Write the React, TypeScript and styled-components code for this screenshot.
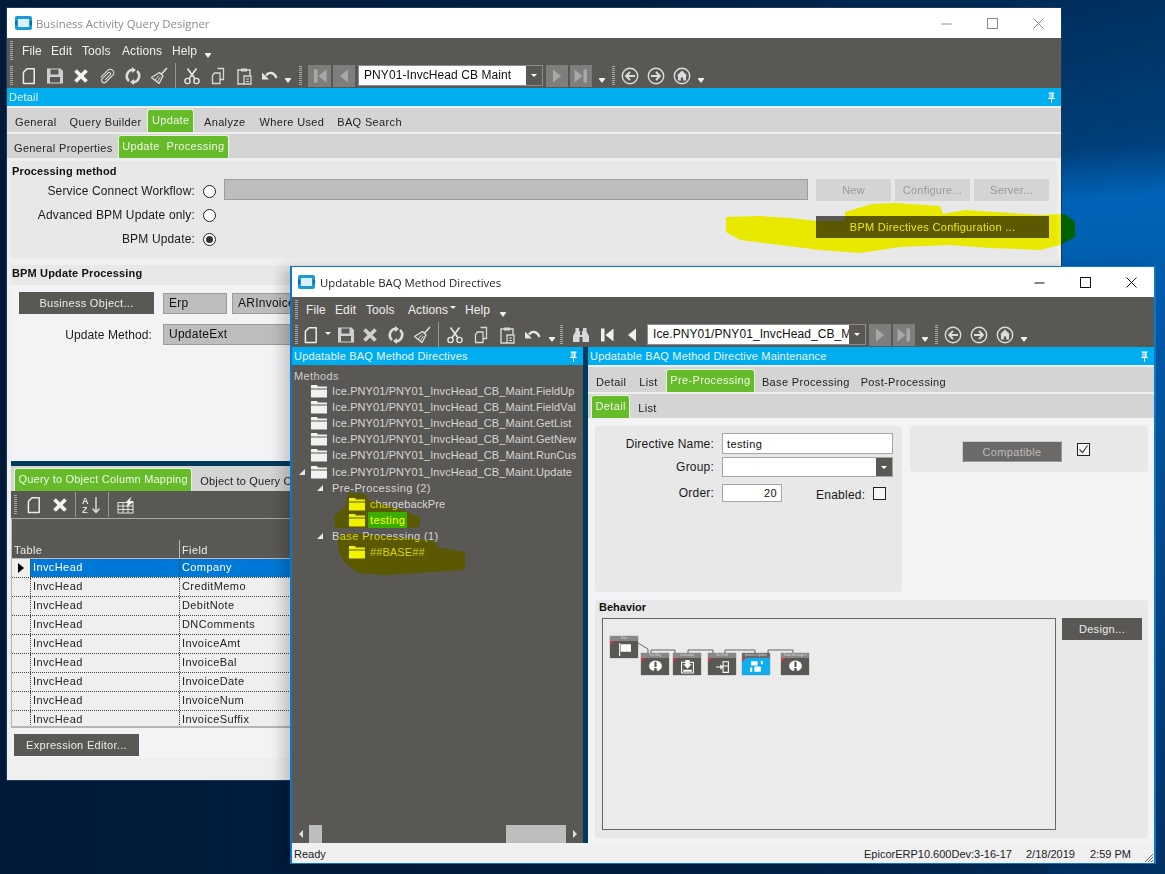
import React from "react";
import styled, { createGlobalStyle } from "styled-components";

const GlobalStyle = createGlobalStyle`
  html, body {
    margin: 0;
    padding: 0;
    height: 100%;
  }
  body {
    font-family: "Liberation Sans", Arial, sans-serif;
    font-size: 12px;
    overflow: hidden;
  }
`;

const DARK = "#5a5855";
const BLUE = "#00adef";
const GREEN = "#66bb2a";
const NAVY = "#003a5c";
const TAB_GREY = "#d4d4d4";
const GROUP_GREY = "#e8e8e8";
const PANEL = "#f3f3f6";

const Desktop = styled.div`
  position: relative;
  width: 1165px;
  height: 874px;
  overflow: hidden;
  background:
    linear-gradient(176deg, rgba(0, 50, 100, 0.2) 0%, rgba(0, 70, 135, 0.7) 17%, rgba(0, 100, 185, 0.98) 23%, rgba(0, 78, 150, 0.9) 60%, rgba(0, 50, 105, 0.7) 100%) right / 10% 100% no-repeat,
    linear-gradient(90deg, #011a38 0%, #011e42 55%, #00305f 100%);
`;

const QueryWindow = styled.div`
  position: absolute;
  left: 6px;
  top: 7px;
  width: 1054px;
  height: 772px;
  border: 1px solid #1c3a55;
  background: #efefef;
  display: flex;
  flex-direction: column;
`;

const DirectiveWindow = styled.div`
  position: absolute;
  left: 290px;
  top: 266px;
  width: 862px;
  height: 596px;
  border: 2px solid #0a78c8;
  border-width: 1px 2px 1px 2px;
  background: #efefef;
  display: flex;
  flex-direction: column;
  box-shadow: -8px 2px 12px rgba(0, 0, 0, 0.18);
`;

const TitleBar = styled.div<{ $inset: number; $gap: number }>`
  height: 30px;
  flex: none;
  background: #fff;
  display: flex;
  align-items: center;
  padding-left: ${(props) => props.$inset}px;
  gap: ${(props) => props.$gap}px;
`;

const TitleText = styled.div<{ $dim?: boolean }>`
  flex: 1;
  font-family: "Open Sans", "Liberation Sans", sans-serif;
  font-size: 11.4px;
  color: ${(props) => (props.$dim ? "#8b8b8b" : "#222")};
`;

const WindowControls = styled.div<{ $dim?: boolean }>`
  display: flex;
  color: ${(props) => (props.$dim ? "#8a8a8a" : "#111")};
`;

const WindowControl = styled.div`
  width: 46px;
  height: 30px;
  display: flex;
  align-items: center;
  justify-content: center;
`;

const Toolbars = styled.div`
  flex: none;
  height: 50px;
  background: ${DARK};
  color: #f0f0f0;
  display: flex;
  flex-direction: column;
`;

const MenuRow = styled.div`
  height: 25px;
  display: flex;
  align-items: center;
  padding-left: 3px;
`;

const IconRow = styled.div`
  height: 25px;
  display: flex;
  align-items: center;
  padding-left: 3px;
`;

const Grip = styled.div<{ $gap?: number }>`
  width: 3px;
  height: 19px;
  flex: none;
  margin-right: ${(props) => props.$gap ?? 6}px;
  background: repeating-linear-gradient(#a8a8a8 0 1px, transparent 1px 2px);
`;

const MenuItem = styled.div<{ $width: number }>`
  width: ${(props) => props.$width}px;
  flex: none;
  font-size: 12px;
  letter-spacing: 0.1px;
  display: flex;
  align-items: center;
`;

const MenuCaret = styled.span`
  margin-left: 2px;
  margin-bottom: 4px;
  border: 3px solid transparent;
  border-top: 3px solid #f0f0f0;
  border-bottom: none;
`;

const Overflow = styled.div<{ $width?: number }>`
  width: ${(props) => props.$width ?? 10}px;
  height: 16px;
  flex: none;
  display: flex;
  align-items: flex-end;
  justify-content: center;
  padding-bottom: 1px;
  &::after {
    content: "";
    border: 3.5px solid transparent;
    border-top: 4px solid #f0f0f0;
    border-bottom: none;
    box-shadow: 0 -1px 0 #f0f0f0;
  }
`;

const NewDrop = styled.div`
  width: 14px;
  flex: none;
  display: flex;
  justify-content: center;
  padding-bottom: 3px;
  &::after {
    content: "";
    border: 3.5px solid transparent;
    border-top: 3.5px solid #f0f0f0;
    border-bottom: none;
  }
`;

const ToolButton = styled.div<{ $width?: number; $disabled?: boolean }>`
  width: ${(props) => props.$width ?? 26}px;
  height: 22px;
  flex: none;
  display: flex;
  align-items: center;
  justify-content: center;
  color: #ececec;
  background: ${(props) => (props.$disabled ? "#807e7c" : "transparent")};
`;

const ToolSeparator = styled.div<{ $left?: number; $right?: number }>`
  width: 1px;
  height: 25px;
  flex: none;
  margin: 0 ${(props) => props.$right ?? 3}px 0 ${(props) => props.$left ?? 3}px;
  background: #9a9896;
`;

const Spacer = styled.div<{ $width: number }>`
  width: ${(props) => props.$width}px;
  flex: none;
`;

const RecordCombo = styled.div<{ $width: number }>`
  width: ${(props) => props.$width}px;
  height: 21px;
  flex: none;
  display: flex;
  align-items: stretch;
  margin: 0 3px;
  border: 1px solid #8d8d8d;
  box-sizing: border-box;
  background: #fff;
  color: #111;
`;

const RecordText = styled.div`
  flex: 1;
  min-width: 0;
  overflow: hidden;
  white-space: nowrap;
  padding-left: 5px;
  line-height: 19px;
  font-size: 12px;
  letter-spacing: 0.08px;
`;

const DropButton = styled.div<{ $width?: number }>`
  width: ${(props) => props.$width ?? 16}px;
  flex: none;
  background: ${DARK};
  display: flex;
  align-items: center;
  justify-content: center;
  &::after {
    content: "";
    border: 3px solid transparent;
    border-top: 3px solid #fff;
    border-bottom: none;
  }
`;

const BlueBar = styled.div`
  height: 18px;
  flex: none;
  background: ${BLUE};
  color: #e8f6fd;
  font-size: 11px;
  letter-spacing: 0.2px;
  display: flex;
  align-items: center;
  justify-content: space-between;
  padding: 0 5px 0 2px;
`;

const TabStrip = styled.div<{ $height?: number; $gap?: number; $inset?: number }>`
  height: ${(props) => props.$height ?? 24}px;
  flex: none;
  margin-top: ${(props) => props.$gap ?? 2}px;
  background: ${TAB_GREY};
  display: flex;
  align-items: flex-end;
  padding-left: ${(props) => props.$inset ?? 4}px;
  white-space: nowrap;
  overflow: hidden;
`;

const Tab = styled.div<{ $active?: boolean; $left?: number; $right?: number; $tight?: boolean }>`
  height: ${(props) => (props.$active ? 23 : 21)}px;
  flex: none;
  box-sizing: border-box;
  padding: ${(props) =>
    props.$active
      ? "0 3.5px 3px"
      : `0 ${props.$right ?? 0}px 0 ${props.$left ?? 0}px`};
  font-size: 11px;
  letter-spacing: ${(props) => (props.$tight ? 0.2 : 0.35)}px;
  display: flex;
  align-items: center;
  color: ${(props) => (props.$active ? "#f0f8e8" : "#222")};
  background: ${(props) => (props.$active ? GREEN : "transparent")};
  border: ${(props) => (props.$active ? "1px solid #e5f5d8" : "none")};
  border-bottom: none;
  border-radius: 3px 3px 0 0;
`;

const QueryBody = styled.div`
  flex: 1;
  min-height: 0;
  display: flex;
  flex-direction: column;
  padding: 3px 4px 0 4px;
`;

const MethodGroup = styled.div`
  height: 97px;
  flex: none;
  box-sizing: border-box;
  background: ${GROUP_GREY};
  border-radius: 3px;
  padding: 3px 0 0 1px;
`;

const GroupTitle = styled.div`
  font-size: 11px;
  font-weight: bold;
  color: #111;
  letter-spacing: 0.15px;
  height: 15px;
  line-height: 14px;
`;

const MethodGrid = styled.div`
  display: grid;
  grid-template-columns: 183px 29px 584px 8px 233px;
  grid-template-rows: 24px 24px 24px;
`;

const FieldLabel = styled.div`
  font-size: 12px;
  letter-spacing: 0.15px;
  color: #1a1a1a;
  text-align: right;
  align-self: center;
  white-space: nowrap;
`;

const Radio = styled.div<{ $checked?: boolean }>`
  width: 13px;
  height: 13px;
  box-sizing: border-box;
  border: 1px solid #222;
  border-radius: 50%;
  background: #fff;
  align-self: center;
  justify-self: center;
  position: relative;
  &::after {
    content: "";
    display: ${(props) => (props.$checked ? "block" : "none")};
    position: absolute;
    inset: 2px;
    border-radius: 50%;
    background: #333;
  }
`;

const ReadOnlyField = styled.div<{ $width?: number }>`
  height: 21px;
  box-sizing: border-box;
  background: #bdbdbd;
  border: 1px solid #9c9c9c;
  color: #111;
  font-size: 12px;
  letter-spacing: 0.25px;
  line-height: 19px;
  padding-left: 5px;
  overflow: hidden;
  white-space: nowrap;
  width: ${(props) => (props.$width ? `${props.$width}px` : "auto")};
  flex: none;
`;

const ServiceButtons = styled.div`
  grid-column: 5;
  grid-row: 1;
  display: flex;
  justify-content: space-between;
`;

const GhostButton = styled.div`
  width: 75px;
  height: 22px;
  background: ${TAB_GREY};
  color: #999;
  font-size: 11px;
  letter-spacing: 0.2px;
  display: flex;
  align-items: center;
  justify-content: center;
`;

const DarkButton = styled.div<{ $width: number; $height?: number }>`
  width: ${(props) => props.$width}px;
  height: ${(props) => props.$height ?? 22}px;
  flex: none;
  background: ${DARK};
  color: #ececec;
  font-size: 11px;
  letter-spacing: 0.3px;
  display: flex;
  align-items: center;
  justify-content: center;
`;

const BpmButtonSlot = styled.div`
  grid-column: 5;
  grid-row: 2 / 4;
  padding-top: 13px;
`;

const UpdateTitle = styled.div`
  height: 20px;
  flex: none;
  margin-top: 7px;
  background: ${GROUP_GREY};
  font-size: 11px;
  font-weight: bold;
  letter-spacing: 0.15px;
  line-height: 16px;
  padding-left: 1px;
  color: #111;
`;

const UpdatePanel = styled.div`
  height: 176px;
  flex: none;
  box-sizing: border-box;
  background: ${PANEL};
  padding: 7px 0 0 8px;
`;

const UpdateRow = styled.div<{ $top?: number }>`
  display: flex;
  align-items: center;
  margin-top: ${(props) => props.$top ?? 0}px;
`;

const UpdateLabel = styled.div`
  width: 133px;
  text-align: right;
  font-size: 12px;
  letter-spacing: 0.1px;
  color: #1a1a1a;
`;

const Splitter = styled.div`
  height: 5px;
  flex: none;
  background: ${NAVY};
`;

const MappingToolbar = styled.div`
  height: 28px;
  flex: none;
  background: ${DARK};
  display: flex;
  align-items: center;
  padding-left: 3px;
  border-bottom: 1px solid #a8a8a8;
  box-sizing: border-box;
`;

const GridGroupBand = styled.div`
  height: 21px;
  flex: none;
  background: ${DARK};
  border-left: 1px solid #bbb;
`;

const GridFrame = styled.div`
  height: 188px;
  flex: none;
  overflow: hidden;
  border-left: 1px solid #b5b5b5;
  border-bottom: 2px solid #b5b5b5;
  box-sizing: border-box;
  background: #efefef;
`;

const GridRow = styled.div<{ $header?: boolean }>`
  height: 19px;
  box-sizing: border-box;
  display: grid;
  grid-template-columns: 18px 149px 1fr;
  font-size: 11px;
  letter-spacing: 0.4px;
  line-height: ${(props) => (props.$header ? 20 : 16)}px;
  color: ${(props) => (props.$header ? "#ececec" : "#222")};
  background: ${(props) => (props.$header ? DARK : "transparent")};
  border-bottom: 1px ${(props) => (props.$header ? "solid #bbb" : "dotted #444")};
`;

const GridCell = styled.div<{ $selected?: boolean; $header?: boolean }>`
  padding-left: 2px;
  border-left: 1px ${(props) => (props.$header ? "solid #bbb" : "dotted #444")};
  background: ${(props) => (props.$selected ? "#0078d7" : "transparent")};
  color: ${(props) => (props.$selected ? "#fff" : "inherit")};
`;

const GridSelector = styled.div<{ $current?: boolean }>`
  display: flex;
  align-items: center;
  justify-content: center;
  &::after {
    content: "";
    display: ${(props) => (props.$current ? "block" : "none")};
    border: 5px solid transparent;
    border-left: 6px solid #000;
    border-right: none;
  }
`;

const GridHeaderText = styled.div`
  grid-column: 1 / 3;
  padding-left: 2px;
`;

const BottomButtons = styled.div`
  height: 30px;
  flex: none;
  box-sizing: border-box;
  background: ${PANEL};
  padding: 6px 0 0 3px;
`;

const Highlight = styled.svg<{ $left: number; $top: number }>`
  position: absolute;
  left: ${(props) => props.$left}px;
  top: ${(props) => props.$top}px;
  width: 1165px;
  height: 874px;
  mix-blend-mode: multiply;
  pointer-events: none;
`;

const DirectiveBody = styled.div`
  flex: 1;
  min-height: 0;
  display: flex;
`;

const MethodsPane = styled.div`
  width: 291px;
  flex: none;
  display: flex;
  flex-direction: column;
  background: ${DARK};
`;

const TreeArea = styled.div`
  flex: 1;
  min-height: 0;
  margin-top: 2px;
  padding: 2px 0 0 2px;
  background: ${DARK};
  color: #d6d6d6;
  font-size: 11px;
  letter-spacing: 0.1px;
  overflow: hidden;
`;

const TreeHeading = styled.div`
  height: 14px;
  line-height: 15px;
  letter-spacing: 0.4px;
  color: #cfcfcf;
`;

const TreeRow = styled.div<{ $indent: number }>`
  height: 16.1px;
  display: flex;
  align-items: center;
  white-space: nowrap;
  padding-left: ${(props) => props.$indent}px;
`;

const TreeArrow = styled.span<{ $visible?: boolean }>`
  width: 12px;
  margin-right: 3px;
  flex: none;
  display: flex;
  justify-content: center;
  &::after {
    content: "";
    visibility: ${(props) => (props.$visible ? "visible" : "hidden")};
    border-bottom: 6px solid #e8e8e8;
    border-left: 6px solid transparent;
  }
`;

const TreeLabel = styled.span<{ $selected?: boolean; $plain?: boolean }>`
  margin-left: ${(props) => (props.$selected || props.$plain ? 3 : 5)}px;
  padding: ${(props) => (props.$selected ? "0 2px" : "0")};
  line-height: 16px;
  letter-spacing: ${(props) => (props.$selected || props.$plain ? 0.4 : 0.1)}px;
  background: ${(props) => (props.$selected ? "#3cac00" : "transparent")};
  color: ${(props) => (props.$selected ? "#fff" : "inherit")};
`;

const HorizontalScroll = styled.div`
  height: 18px;
  flex: none;
  display: flex;
  align-items: stretch;
  background: ${DARK};
`;

const ScrollArrow = styled.div<{ $right?: boolean }>`
  width: 17px;
  flex: none;
  display: flex;
  align-items: center;
  justify-content: center;
  &::after {
    content: "";
    border: 4px solid transparent;
    ${(props) =>
      props.$right
        ? "border-left: 4px solid #ddd; border-right: none;"
        : "border-right: 4px solid #ddd; border-left: none;"}
  }
`;

const ScrollThumb = styled.div<{ $width: number; $push?: boolean }>`
  width: ${(props) => props.$width}px;
  flex: none;
  background: #bdbdbd;
  margin-left: ${(props) => (props.$push ? "auto" : "0")};
`;

const PaneSplitter = styled.div`
  width: 5px;
  flex: none;
  background: ${NAVY};
`;

const MaintenancePane = styled.div`
  flex: 1;
  min-width: 0;
  display: flex;
  flex-direction: column;
`;

const MaintenanceBody = styled.div`
  flex: 1;
  min-height: 0;
  box-sizing: border-box;
  background: ${PANEL};
  padding: 8px 6px 5px 7px;
  display: flex;
  flex-direction: column;
  gap: 8px;
`;

const TopGroups = styled.div`
  height: 166px;
  flex: none;
  display: flex;
  gap: 8px;
  align-items: flex-start;
`;

const DirectiveGroup = styled.div`
  width: 307px;
  height: 166px;
  flex: none;
  box-sizing: border-box;
  background: ${GROUP_GREY};
  border-radius: 4px;
  padding-top: 7px;
`;

const FormRow = styled.div<{ $height: number; $top?: number }>`
  height: ${(props) => props.$height}px;
  margin-top: ${(props) => props.$top ?? 0}px;
  display: flex;
  align-items: center;
`;

const FormLabel = styled.div`
  width: 119px;
  margin-right: 8px;
  text-align: right;
  font-size: 12px;
  letter-spacing: 0.2px;
  color: #1a1a1a;
`;

const TextBox = styled.div<{ $width: number; $right?: boolean }>`
  width: ${(props) => props.$width}px;
  height: 100%;
  flex: none;
  box-sizing: border-box;
  background: #fff;
  border: 1px solid #a5a5a5;
  color: #111;
  font-size: 11px;
  letter-spacing: 0.4px;
  display: flex;
  align-items: center;
  justify-content: ${(props) => (props.$right ? "flex-end" : "flex-start")};
  padding: 0 4px;
`;

const ComboBox = styled.div<{ $width: number }>`
  width: ${(props) => props.$width}px;
  height: 100%;
  flex: none;
  box-sizing: border-box;
  background: #fff;
  border: 1px solid #a5a5a5;
  display: flex;
  justify-content: flex-end;
`;

const EnabledLabel = styled.div`
  margin-left: 34px;
  margin-right: 8px;
  padding-top: 3px;
  font-size: 12px;
  letter-spacing: 0.25px;
  color: #1a1a1a;
`;

const CheckBox = styled.div<{ $top?: number }>`
  width: 13px;
  height: 13px;
  flex: none;
  box-sizing: border-box;
  margin-top: ${(props) => props.$top ?? 0}px;
  border: 1px solid #222;
  background: #f6f6f6;
  display: flex;
  align-items: center;
  justify-content: center;
`;

const CompatibleGroup = styled.div`
  flex: 1;
  height: 46px;
  background: ${GROUP_GREY};
  border-radius: 4px;
  display: flex;
  align-items: flex-start;
  box-sizing: border-box;
  padding: 15px 0 0 52px;
  gap: 15px;
`;

const CompatibleButton = styled.div`
  width: 100px;
  height: 21px;
  box-sizing: border-box;
  background: #6c6a68;
  border: 1px solid #999;
  border-top-color: #ccc;
  border-left-color: #ccc;
  color: #bdbdbd;
  font-size: 11px;
  letter-spacing: 0.35px;
  display: flex;
  align-items: center;
  justify-content: center;
`;

const BehaviorGroup = styled.div`
  flex: 1;
  min-height: 0;
  background: ${GROUP_GREY};
  border-radius: 4px;
  padding: 0 6px 8px 7px;
  display: flex;
  flex-direction: column;
`;

const BehaviorTitle = styled.div`
  height: 18px;
  line-height: 15px;
  margin-left: -3px;
  font-size: 11px;
  font-weight: bold;
  color: #111;
`;

const BehaviorRow = styled.div`
  flex: 1;
  min-height: 0;
  display: flex;
  gap: 6px;
  align-items: flex-start;
`;

const DiagramCanvas = styled.div`
  width: 454px;
  height: 100%;
  flex: none;
  box-sizing: border-box;
  position: relative;
  background: #ebebeb;
  border: 1px solid #666;
`;

const Connectors = styled.svg`
  position: absolute;
  left: 0;
  top: 0;
  width: 100%;
  height: 100%;
`;

const DiagramNode = styled.div<{ $x: number; $y: number; $blue?: boolean }>`
  position: absolute;
  left: ${(props) => props.$x}px;
  top: ${(props) => props.$y}px;
  width: 28px;
  height: 22px;
  display: flex;
  flex-direction: column;
  background: ${(props) => (props.$blue ? "#10aef0" : DARK)};
  box-shadow: 0 0 1px rgba(0, 0, 0, 0.5);
  overflow: hidden;
`;

const NodeTitle = styled.div<{ $blue?: boolean }>`
  height: 5px;
  flex: none;
  background: ${(props) => (props.$blue ? "#6a6a6a" : "#8a8886")};
  color: #ddd;
  font-size: 3px;
  line-height: 5px;
  text-align: center;
  white-space: nowrap;
  overflow: hidden;
`;

const NodeBadge = styled.div`
  position: absolute;
  left: 0;
  top: 5px;
  border-top: 4px solid #e0304a;
  border-right: 4px solid transparent;
`;

const NodeIcon = styled.div`
  flex: 1;
  display: flex;
  align-items: center;
  justify-content: center;
`;

const StatusBar = styled.div`
  height: 20px;
  flex: none;
  box-sizing: border-box;
  background: #f0f0f0;
  display: flex;
  align-items: center;
  font-size: 11px;
  color: #222;
  padding: 1px 16px 0 2px;
  position: relative;
`;

const StatusReady = styled.div`
  flex: 1;
`;

const StatusCell = styled.div<{ $width: number }>`
  width: ${(props) => props.$width}px;
  flex: none;
  white-space: nowrap;
`;

const SizeGrip = styled.svg`
  position: absolute;
  right: 0;
  bottom: 0;
`;

const Ico = ({ children, size = 20 }: { children: React.ReactNode; size?: number }) => (
  <svg width={size} height={size} viewBox="0 0 20 20" fill="none">
    {children}
  </svg>
);

const AppIcon = () => (
  <svg width="17" height="14" viewBox="0 0 17 14">
    <rect x="0" y="0" width="17" height="14" rx="2" fill="#1d9ad6" />
    <rect x="3" y="3" width="11" height="8" fill="#d8f0fb" />
    <rect x="0" y="5" width="2" height="4" fill="#0a6ea8" />
    <rect x="15" y="5" width="2" height="4" fill="#0a6ea8" />
  </svg>
);

const MinIcon = () => (
  <svg width="11" height="11" viewBox="0 0 11 11">
    <path d="M0.5 6h10" stroke="currentColor" />
  </svg>
);
const MaxIcon = () => (
  <svg width="11" height="11" viewBox="0 0 11 11">
    <rect x="0.5" y="0.5" width="10" height="10" fill="none" stroke="currentColor" />
  </svg>
);
const CloseIcon = () => (
  <svg width="11" height="11" viewBox="0 0 11 11">
    <path d="M0.5 0.5l10 10M10.5 0.5l-10 10" stroke="currentColor" />
  </svg>
);

const NewIcon = () => (
  <Ico>
    <path d="M8 2.8H15.2V17.4H4.4V6.4Z" stroke="currentColor" strokeWidth="1.5" strokeLinejoin="round" />
  </Ico>
);
const SaveIcon = () => (
  <Ico>
    <path
      fillRule="evenodd"
      fill="#cfcfcf"
      d="M2 2.5H15.5L18 5V17.5H2ZM5.5 3.5V8.5H13.5V3.5ZM5 11V16.5H15V11Z"
    />
  </Ico>
);
const CrossIcon = ({ dim }: { dim?: boolean }) => (
  <Ico>
    <path d="M4.5 4.5L15.5 15.5M15.5 4.5L4.5 15.5" stroke={dim ? "#cfcfcf" : "#f2f2f2"} strokeWidth="3.8" />
  </Ico>
);
const ClipIcon = () => (
  <Ico>
    <path
      transform="rotate(45 10 10)"
      d="M6.5 15.5V5.5a3.5 3.5 0 0 1 7 0V15a2.5 2.5 0 0 1-5 0V7a1.5 1.5 0 0 1 3 0v7"
      stroke="#dcdcdc"
      strokeWidth="1.1"
    />
  </Ico>
);
const RefreshIcon = () => (
  <Ico>
    <path d="M10.5 3.8A6.4 6.4 0 0 0 6 15" stroke="#dcdcdc" strokeWidth="2.6" />
    <path d="M9 1L13 4L9 7Z" fill="#dcdcdc" />
    <path d="M9.5 16.2A6.4 6.4 0 0 0 14 5" stroke="#dcdcdc" strokeWidth="2.6" />
    <path d="M11 19L7 16L11 13Z" fill="#dcdcdc" />
  </Ico>
);
const BroomIcon = () => (
  <Ico>
    <path d="M18 2L12.5 8" stroke="#e0e0e0" strokeWidth="1.6" />
    <path d="M10.5 6.5L14 10L10 17.5L2.5 11.5Z" stroke="#e0e0e0" strokeWidth="1.3" strokeLinejoin="round" />
    <path d="M6 14L10 9.5M8 15.8L11.5 11" stroke="#e0e0e0" />
  </Ico>
);
const ScissorsIcon = () => (
  <Ico>
    <circle cx="5.5" cy="15" r="2.6" stroke="#e4e4e4" strokeWidth="1.4" />
    <circle cx="14.5" cy="15" r="2.6" stroke="#e4e4e4" strokeWidth="1.4" />
    <path d="M7 12.8L14.5 2.5M13 12.8L5.5 2.5" stroke="#e4e4e4" strokeWidth="1.7" />
  </Ico>
);
const CopyIcon = () => (
  <Ico>
    <path d="M9.5 2.5H15.5V13.5H12" stroke="#d8d8d8" strokeWidth="1.3" />
    <path d="M6.5 7H12V17.5H4.5V9.5Z" stroke="#d8d8d8" strokeWidth="1.3" />
  </Ico>
);
const PasteIcon = () => (
  <Ico>
    <path d="M7 4H4V18H10M13 4H16V9" stroke="#d8d8d8" strokeWidth="1.4" />
    <rect x="7" y="2.5" width="6" height="3" fill="#d8d8d8" />
    <path d="M10 10H17V18H10Z" stroke="#d8d8d8" strokeWidth="1.3" />
    <path d="M12 13H15M12 15.5H15" stroke="#d8d8d8" />
  </Ico>
);
const UndoIcon = () => (
  <Ico>
    <path d="M6 9.5C9 5.5 14 6 16.5 12" stroke="#e4e4e4" strokeWidth="2.4" />
    <path d="M2 6.5L9 13.5H2Z" fill="#e4e4e4" />
  </Ico>
);
const BinocularsIcon = () => (
  <Ico>
    <path
      fill="#d8d8d8"
      d="M4.5 3H8V6H9V10H11V6H12V3H15.5V6.5L18 11V17H11.5V12H8.5V17H2V11L4.5 6.5Z"
    />
  </Ico>
);
const FirstIcon = ({ dim }: { dim?: boolean }) => (
  <Ico>
    <path d="M4 3.5H7.5V16.5H4ZM16.5 3.5V16.5L8.5 10Z" fill={dim ? "#aaa8a6" : "#f0f0f0"} />
  </Ico>
);
const PrevIcon = ({ dim }: { dim?: boolean }) => (
  <Ico>
    <path d="M14 3.5V16.5L6 10Z" fill={dim ? "#aaa8a6" : "#f0f0f0"} />
  </Ico>
);
const NextIcon = () => (
  <Ico>
    <path d="M6 3.5V16.5L14 10Z" fill="#aaa8a6" />
  </Ico>
);
const LastIcon = () => (
  <Ico>
    <path d="M16 3.5H12.5V16.5H16ZM3.5 3.5V16.5L11.5 10Z" fill="#aaa8a6" />
  </Ico>
);
const BackIcon = () => (
  <Ico>
    <circle cx="10" cy="10" r="7.7" stroke="#dcdcdc" strokeWidth="1.4" />
    <path d="M15 10H6.5M10 6L6 10L10 14" stroke="#dcdcdc" strokeWidth="1.8" />
  </Ico>
);
const ForwardIcon = () => (
  <Ico>
    <circle cx="10" cy="10" r="7.7" stroke="#dcdcdc" strokeWidth="1.4" />
    <path d="M5 10H13.5M10 6L14 10L10 14" stroke="#dcdcdc" strokeWidth="1.8" />
  </Ico>
);
const HomeIcon = () => (
  <Ico>
    <circle cx="10" cy="10" r="7.7" stroke="#dcdcdc" strokeWidth="1.4" />
    <path d="M10 4.5L15 9.5H14V14.5H11.2V11.5H8.8V14.5H6V9.5H5Z" fill="#dcdcdc" />
  </Ico>
);
const SortIcon = () => (
  <svg width="22" height="20" viewBox="0 0 22 20" fill="none">
    <text x="1" y="8.5" fontSize="9" fontWeight="bold" fill="#e0e0e0" fontFamily="Liberation Sans">
      A
    </text>
    <text x="1" y="18" fontSize="9" fontWeight="bold" fill="#e0e0e0" fontFamily="Liberation Sans">
      Z
    </text>
    <path d="M15 2V17M11.5 13.5L15 17.5L18.5 13.5" stroke="#e0e0e0" strokeWidth="1.4" />
  </svg>
);
const GridBoltIcon = () => (
  <Ico>
    <path d="M3 7.5H18V18H3ZM3 11H18M3 14.5H18M8 7.5V18M13 7.5V18" stroke="#dcdcdc" strokeWidth="1.1" />
    <path d="M11 7L16.5 1.5L15 6H19L11.5 12.5L13 8Z" fill="#f0f0f0" />
  </Ico>
);
const PinIcon = () => (
  <svg width="9" height="11" viewBox="0 0 9 11">
    <path d="M1.5 0.5H7.5V1.5H6.5V6H8V7H5V11H4V7H1V6H2.5V1.5H1.5ZM3.5 1.5V6H4.5V1.5Z" fill="#fff" fillRule="evenodd" />
  </svg>
);
const FolderShape = styled.svg`
  flex: none;
`;
const FolderIcon = () => (
  <FolderShape width="16" height="14" viewBox="0 0 16 14">
    <path d="M0 1H6L7 2.5H16V4.5H0ZM0 5.5H16V13.5H0Z" fill="#f2f2f2" />
  </FolderShape>
);

const MainToolButtons = ({ hasDrop }: { hasDrop?: boolean }) => (
  <>
    <ToolButton $width={hasDrop ? 20 : 26}>
      <NewIcon />
    </ToolButton>
    {hasDrop && <NewDrop />}
    <ToolButton $width={hasDrop ? 22 : 26}>
      <SaveIcon />
    </ToolButton>
    <ToolButton>
      <CrossIcon dim={hasDrop} />
    </ToolButton>
    {!hasDrop && (
      <ToolButton>
        <ClipIcon />
      </ToolButton>
    )}
    <ToolButton>
      <RefreshIcon />
    </ToolButton>
    <ToolButton>
      <BroomIcon />
    </ToolButton>
    <ToolSeparator $left={3} $right={3} />
    <ToolButton>
      <ScissorsIcon />
    </ToolButton>
    <ToolButton>
      <CopyIcon />
    </ToolButton>
    <ToolButton>
      <PasteIcon />
    </ToolButton>
    <ToolButton>
      <UndoIcon />
    </ToolButton>
  </>
);

const HistoryButtons = () => (
  <>
    <ToolButton>
      <BackIcon />
    </ToolButton>
    <ToolButton>
      <ForwardIcon />
    </ToolButton>
    <ToolButton>
      <HomeIcon />
    </ToolButton>
  </>
);

const gridRows = [
  "Company",
  "CreditMemo",
  "DebitNote",
  "DNComments",
  "InvoiceAmt",
  "InvoiceBal",
  "InvoiceDate",
  "InvoiceNum",
  "InvoiceSuffix",
];

const methods = ["FieldUp", "FieldVal", "GetList", "GetNew", "RunCus", "Update"];

const QueryDesigner = () => (
  <QueryWindow>
    <TitleBar $inset={8} $gap={4}>
      <AppIcon />
      <TitleText $dim>Business Activity Query Designer</TitleText>
      <WindowControls $dim>
        <WindowControl>
          <MinIcon />
        </WindowControl>
        <WindowControl>
          <MaxIcon />
        </WindowControl>
        <WindowControl>
          <CloseIcon />
        </WindowControl>
      </WindowControls>
    </TitleBar>
    <Toolbars>
      <MenuRow>
        <Grip $gap={9} />
        <MenuItem $width={29}>File</MenuItem>
        <MenuItem $width={31}>Edit</MenuItem>
        <MenuItem $width={40}>Tools</MenuItem>
        <MenuItem $width={50}>Actions</MenuItem>
        <MenuItem $width={31}>Help</MenuItem>
        <Overflow $width={10} />
      </MenuRow>
      <IconRow>
        <Grip $gap={3} />
        <MainToolButtons />
        <Overflow $width={10} />
        <Spacer $width={6} />
        <Grip $gap={6} />
        <ToolButton $width={23} $disabled>
          <FirstIcon dim />
        </ToolButton>
        <Spacer $width={2} />
        <ToolButton $width={22} $disabled>
          <PrevIcon dim />
        </ToolButton>
        <RecordCombo $width={185}>
          <RecordText>PNY01-InvcHead CB Maint</RecordText>
          <DropButton />
        </RecordCombo>
        <ToolButton $width={22} $disabled>
          <NextIcon />
        </ToolButton>
        <Spacer $width={2} />
        <ToolButton $width={22} $disabled>
          <LastIcon />
        </ToolButton>
        <Overflow $width={20} />
        <Grip $gap={2} />
        <HistoryButtons />
        <Overflow $width={11} />
      </IconRow>
    </Toolbars>
    <BlueBar>
      Detail
      <PinIcon />
    </BlueBar>
    <TabStrip>
      <Tab $left={4} $right={4}>General</Tab>
      <Tab $left={9} $right={6}>Query Builder</Tab>
      <Tab $active>Update</Tab>
      <Tab $left={10} $right={6}>Analyze</Tab>
      <Tab $left={8} $right={6}>Where Used</Tab>
      <Tab $left={7}>BAQ Search</Tab>
    </TabStrip>
    <TabStrip>
      <Tab $left={3} $right={5}>General Properties</Tab>
      <Tab $active>Update&nbsp; Processing</Tab>
    </TabStrip>
    <QueryBody>
      <MethodGroup>
        <GroupTitle>Processing method</GroupTitle>
        <MethodGrid>
          <FieldLabel>Service Connect Workflow:</FieldLabel>
          <Radio />
          <ReadOnlyField />
          <span />
          <ServiceButtons>
            <GhostButton>New</GhostButton>
            <GhostButton>Configure...</GhostButton>
            <GhostButton>Server...</GhostButton>
          </ServiceButtons>
          <FieldLabel>Advanced BPM Update only:</FieldLabel>
          <Radio />
          <span />
          <span />
          <BpmButtonSlot>
            <DarkButton $width={233}>BPM Directives Configuration ...</DarkButton>
          </BpmButtonSlot>
          <FieldLabel>BPM Update:</FieldLabel>
          <Radio $checked />
        </MethodGrid>
      </MethodGroup>
      <UpdateTitle>BPM Update Processing</UpdateTitle>
      <UpdatePanel>
        <UpdateRow>
          <DarkButton $width={135}>Business Object...</DarkButton>
          <Spacer $width={9} />
          <ReadOnlyField $width={64}>Erp</ReadOnlyField>
          <Spacer $width={5} />
          <ReadOnlyField $width={200}>ARInvoice</ReadOnlyField>
        </UpdateRow>
        <UpdateRow $top={10}>
          <UpdateLabel>Update Method:</UpdateLabel>
          <Spacer $width={11} />
          <ReadOnlyField $width={270}>UpdateExt</ReadOnlyField>
        </UpdateRow>
      </UpdatePanel>
      <Splitter />
      <TabStrip $gap={0} $height={25} $inset={3}>
        <Tab $active $tight>Query to Object Column Mapping</Tab>
        <Tab $left={8} $tight>Object to Query C</Tab>
      </TabStrip>
      <MappingToolbar>
        <Grip $gap={4} />
        <ToolButton>
          <NewIcon />
        </ToolButton>
        <ToolButton>
          <CrossIcon />
        </ToolButton>
        <ToolSeparator $left={2} $right={2} />
        <ToolButton $width={28}>
          <SortIcon />
        </ToolButton>
        <ToolSeparator $left={2} $right={2} />
        <ToolButton $width={28}>
          <GridBoltIcon />
        </ToolButton>
      </MappingToolbar>
      <GridGroupBand />
      <GridFrame>
        <GridRow $header>
          <GridHeaderText>Table</GridHeaderText>
          <GridCell $header>Field</GridCell>
        </GridRow>
        {gridRows.map((field, index) => (
          <GridRow key={field}>
            <GridSelector $current={index === 0} />
            <GridCell $selected={index === 0}>InvcHead</GridCell>
            <GridCell $selected={index === 0}>{field}</GridCell>
          </GridRow>
        ))}
      </GridFrame>
      <BottomButtons>
        <DarkButton $width={125}>Expression Editor...</DarkButton>
      </BottomButtons>
    </QueryBody>
    <Highlight viewBox="0 0 1165 874" $left={-7} $top={-8}>
      <path
        fill="#ffff00"
        d="M726 217L760 216L790 218L816 221L845 221L845 212L872 204L895 203L940 206L943 214L965 210L1010 213L1040 215L1065 214L1075 222L1075 237L1060 245L1040 250L990 248L950 245L900 247L860 253L820 250L780 245L740 240L726 232Z"
      />
    </Highlight>
  </QueryWindow>
);

const nodes = [
  { x: 7, y: 17, title: "Start", icon: "flag" },
  { x: 38, y: 34, title: "Test Msg", icon: "msg" },
  { x: 70, y: 34, title: "Invoiceapt", icon: "down" },
  { x: 105, y: 34, title: "Set Field", icon: "set" },
  { x: 139, y: 34, title: "bInvoice Update", icon: "method", blue: true },
  { x: 178, y: 34, title: "Show Message 5", icon: "msg" },
];

const NodeGlyph = ({ kind }: { kind: string }) => (
  <svg width="15" height="15" viewBox="0 0 14 14">
    {kind === "flag" && <path d="M2 1H3V13H2ZM3.5 2H13V9H3.5Z" fill="#fff" />}
    {kind === "msg" && (
      <>
        <ellipse cx="7" cy="6.5" rx="6" ry="5" fill="#fff" />
        <path d="M6 2.5H8V7.5H6ZM6 8.5H8V10H6ZM5 10L9 10L7 13.5Z" fill="#555" />
      </>
    )}
    {kind === "down" && (
      <>
        <path d="M1.5 3H12.5V13H1.5Z" fill="none" stroke="#fff" />
        <path d="M5 1H9V5H11L7 9L3 5H5ZM3 10H11V12H3Z" fill="#fff" />
      </>
    )}
    {kind === "set" && <path d="M7 2H13V13H7ZM8 3V6H12V3ZM8 7V12H12V7ZM1 7H5V5L7.5 7.5L5 10V8H1Z" fill="#fff" fillRule="evenodd" />}
    {kind === "method" && <path d="M2 2H8V6H2ZM5 7H11V12H5ZM1 8H3V12H1ZM11 2H13V5H11Z" fill="#fff" />}
  </svg>
);

const MethodDirectives = () => (
  <DirectiveWindow>
    <TitleBar $inset={6} $gap={5}>
      <AppIcon />
      <TitleText>Updatable BAQ Method Directives</TitleText>
      <WindowControls>
        <WindowControl>
          <MinIcon />
        </WindowControl>
        <WindowControl>
          <MaxIcon />
        </WindowControl>
        <WindowControl>
          <CloseIcon />
        </WindowControl>
      </WindowControls>
    </TitleBar>
    <Toolbars>
      <MenuRow>
        <Grip $gap={8} />
        <MenuItem $width={29}>File</MenuItem>
        <MenuItem $width={31}>Edit</MenuItem>
        <MenuItem $width={42}>Tools</MenuItem>
        <MenuItem $width={57}>
          Actions
          <MenuCaret />
        </MenuItem>
        <MenuItem $width={32}>Help</MenuItem>
        <Overflow $width={12} />
      </MenuRow>
      <IconRow>
        <Grip $gap={3} />
        <MainToolButtons hasDrop />
        <Overflow $width={12} />
        <Spacer $width={2} />
        <Grip $gap={5} />
        <ToolButton>
          <BinocularsIcon />
        </ToolButton>
        <ToolButton>
          <FirstIcon />
        </ToolButton>
        <ToolButton $width={24}>
          <PrevIcon />
        </ToolButton>
        <RecordCombo $width={219}>
          <RecordText>Ice.PNY01/PNY01_InvcHead_CB_Maint.Update</RecordText>
          <DropButton />
        </RecordCombo>
        <ToolButton $width={22} $disabled>
          <NextIcon />
        </ToolButton>
        <Spacer $width={2} />
        <ToolButton $width={22} $disabled>
          <LastIcon />
        </ToolButton>
        <Overflow $width={20} />
        <Grip $gap={2} />
        <HistoryButtons />
        <Overflow $width={12} />
      </IconRow>
    </Toolbars>
    <DirectiveBody>
      <MethodsPane>
        <BlueBar>
          Updatable BAQ Method Directives
          <PinIcon />
        </BlueBar>
        <TreeArea>
          <TreeHeading>Methods</TreeHeading>
          {methods.map((method) => (
            <TreeRow key={method} $indent={2}>
              <TreeArrow $visible={method === "Update"} />
              <FolderIcon />
              <TreeLabel>{`Ice.PNY01/PNY01_InvcHead_CB_Maint.${method}`}</TreeLabel>
            </TreeRow>
          ))}
          <TreeRow $indent={20}>
            <TreeArrow $visible />
            <TreeLabel $plain>Pre-Processing (2)</TreeLabel>
          </TreeRow>
          <TreeRow $indent={40}>
            <TreeArrow />
            <FolderIcon />
            <TreeLabel>chargebackPre</TreeLabel>
          </TreeRow>
          <TreeRow $indent={40}>
            <TreeArrow />
            <FolderIcon />
            <TreeLabel $selected>testing</TreeLabel>
          </TreeRow>
          <TreeRow $indent={20}>
            <TreeArrow $visible />
            <TreeLabel $plain>Base Processing (1)</TreeLabel>
          </TreeRow>
          <TreeRow $indent={40}>
            <TreeArrow />
            <FolderIcon />
            <TreeLabel>##BASE##</TreeLabel>
          </TreeRow>
        </TreeArea>
        <HorizontalScroll>
          <ScrollArrow />
          <ScrollThumb $width={13} />
          <ScrollThumb $width={60} $push />
          <ScrollArrow $right />
        </HorizontalScroll>
      </MethodsPane>
      <PaneSplitter />
      <MaintenancePane>
        <BlueBar>
          Updatable BAQ Method Directive Maintenance
          <PinIcon />
        </BlueBar>
        <TabStrip $height={25}>
          <Tab $left={4} $right={7}>Detail</Tab>
          <Tab $left={6} $right={8}>List</Tab>
          <Tab $active>Pre-Processing</Tab>
          <Tab $left={7} $right={5}>Base Processing</Tab>
          <Tab $left={6}>Post-Processing</Tab>
        </TabStrip>
        <TabStrip $height={24} $inset={3}>
          <Tab $active>Detail</Tab>
          <Tab $left={8}>List</Tab>
        </TabStrip>
        <MaintenanceBody>
          <TopGroups>
            <DirectiveGroup>
              <FormRow $height={21}>
                <FormLabel>Directive Name:</FormLabel>
                <TextBox $width={171}>testing</TextBox>
              </FormRow>
              <FormRow $height={20} $top={3}>
                <FormLabel>Group:</FormLabel>
                <ComboBox $width={171}>
                  <DropButton />
                </ComboBox>
              </FormRow>
              <FormRow $height={18} $top={7}>
                <FormLabel>Order:</FormLabel>
                <TextBox $width={60} $right>
                  20
                </TextBox>
                <EnabledLabel>Enabled:</EnabledLabel>
                <CheckBox />
              </FormRow>
            </DirectiveGroup>
            <CompatibleGroup>
              <CompatibleButton>Compatible</CompatibleButton>
              <CheckBox $top={2}>
                <svg width="11" height="11" viewBox="0 0 11 11">
                  <path d="M1.5 5.5L4.5 8.5L9.5 1.5" fill="none" stroke="#444" strokeWidth="1.2" />
                </svg>
              </CheckBox>
            </CompatibleGroup>
          </TopGroups>
          <BehaviorGroup>
            <BehaviorTitle>Behavior</BehaviorTitle>
            <BehaviorRow>
              <DiagramCanvas>
                <Connectors>
                  <path
                    d="M35 24L45 30V34M48 34V31H72V34M85 34V31H110V34M122 34V31H152V34M165 34V31H190V34"
                    fill="none"
                    stroke="#666"
                    strokeWidth="1"
                  />
                </Connectors>
                {nodes.map((node) => (
                  <DiagramNode key={node.x} $x={node.x} $y={node.y} $blue={node.blue}>
                    <NodeTitle $blue={node.blue}>{node.title}</NodeTitle>
                    <NodeBadge />
                    <NodeIcon>
                      <NodeGlyph kind={node.icon} />
                    </NodeIcon>
                  </DiagramNode>
                ))}
              </DiagramCanvas>
              <DarkButton $width={80}>Design...</DarkButton>
            </BehaviorRow>
          </BehaviorGroup>
        </MaintenanceBody>
      </MaintenancePane>
    </DirectiveBody>
    <StatusBar>
      <StatusReady>Ready</StatusReady>
      <StatusCell $width={162}>EpicorERP10.600Dev:3-16-17</StatusCell>
      <StatusCell $width={64}>2/18/2019</StatusCell>
      <StatusCell $width={48}>2:59 PM</StatusCell>
      <SizeGrip width="12" height="12" viewBox="0 0 12 12">
        <path d="M11 3L3 11M11 6L6 11M11 9L9 11" stroke="#666" />
      </SizeGrip>
    </StatusBar>
    <Highlight viewBox="0 0 1165 874" $left={-292} $top={-267}>
      <path
        fill="#ffff00"
        d="M348 492L365 494L368 500L405 511L420 517L420 527L405 528L368 528L335 528L334 515L345 507Z"
      />
      <path
        fill="#ffff00"
        d="M348 533L370 535L435 541L437 547L465 552L465 570L385 575L358 573L345 563L338 550L338 537Z"
      />
    </Highlight>
  </DirectiveWindow>
);

export default function App() {
  return (
    <>
      <GlobalStyle />
      <Desktop>
        <QueryDesigner />
        <MethodDirectives />
      </Desktop>
    </>
  );
}
